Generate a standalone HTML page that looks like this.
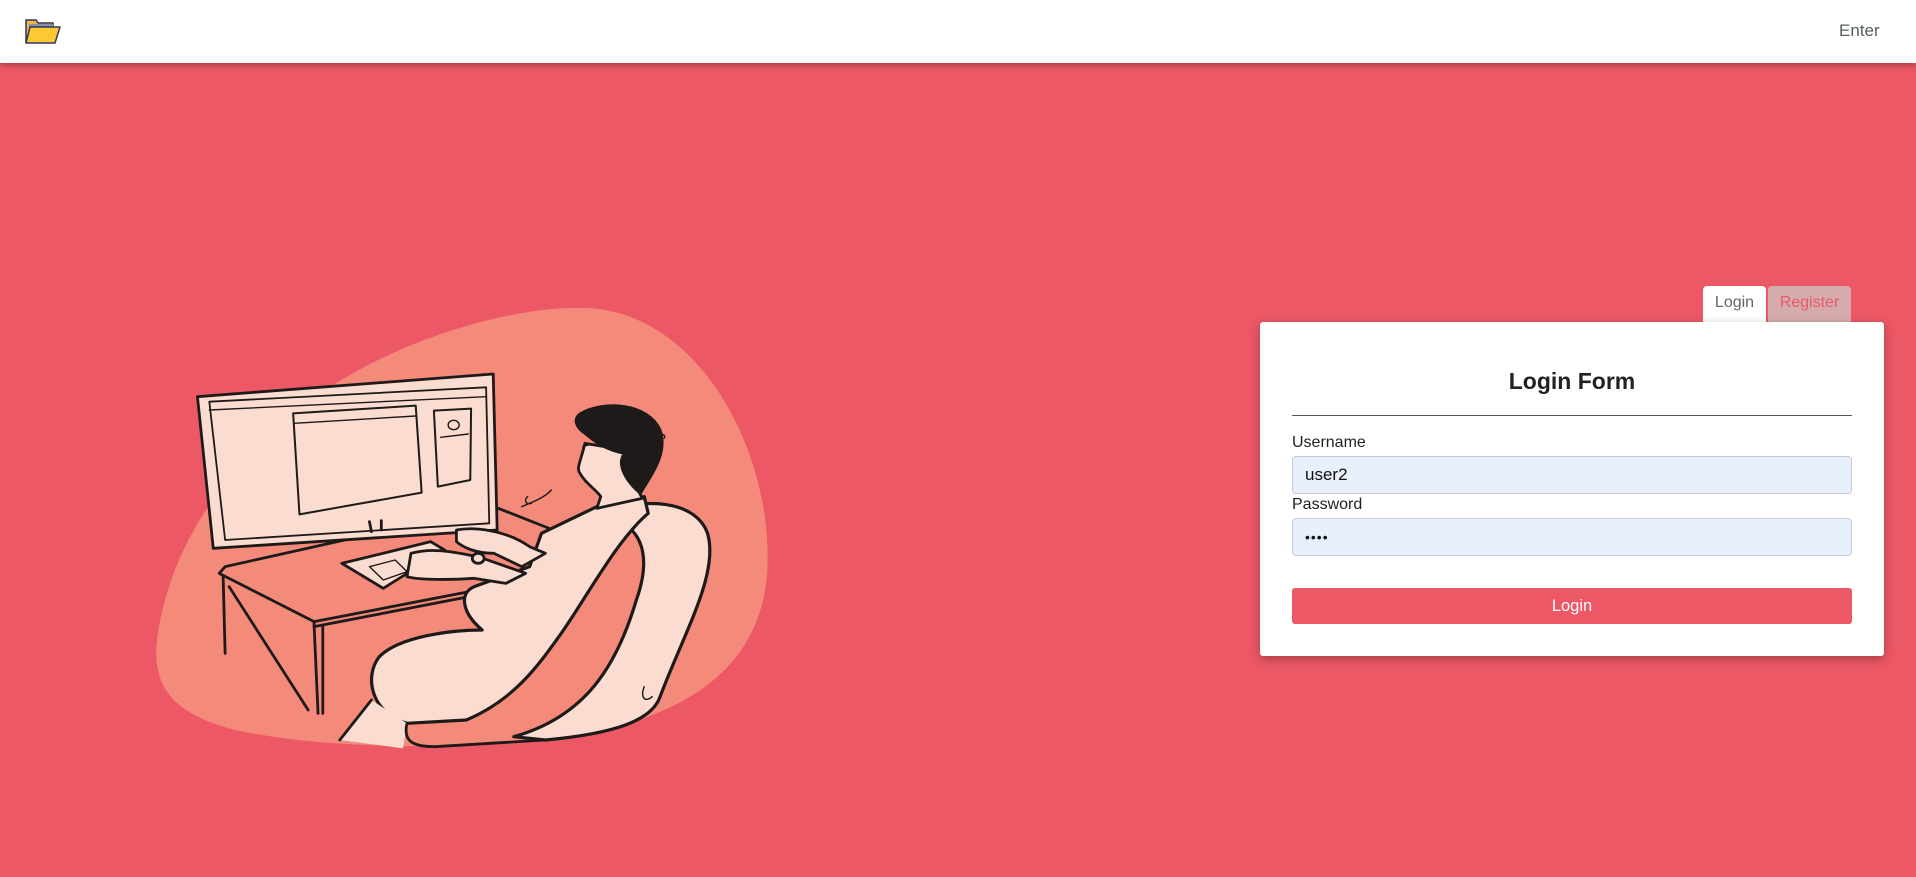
<!DOCTYPE html>
<html><head><meta charset="utf-8">
<style>
*{box-sizing:border-box;margin:0;padding:0}
html,body{width:1916px;height:877px;overflow:hidden}
body{background:#EC5866;font-family:"Liberation Sans",Roboto,Arial,sans-serif;position:relative}
.hdr{position:absolute;left:0;top:0;width:1916px;height:63px;background:#fff;box-shadow:0 2px 6px rgba(0,0,0,.35);z-index:2}
.enter{position:absolute;left:1839px;top:21px;font-size:17px;color:#55605a}
.tab{position:absolute;top:286px;height:36px;border-radius:4px 4px 0 0;font-size:16px;text-align:center;line-height:34px}
.t1{left:1703px;width:63px;background:#fff;color:#666}
.t2{left:1768px;width:83px;background:#D6ABAB;color:#E85A68}
.card{position:absolute;left:1260px;top:322px;width:624px;height:334px;background:#fff;border-radius:3px;box-shadow:0 3px 10px rgba(0,0,0,.3)}
.title{position:absolute;left:0;width:624px;top:368px;text-align:center;font-size:23px;font-weight:bold;color:#222}
.hr{position:absolute;left:1292px;top:415px;width:560px;height:1px;background:#555}
.lbl{position:absolute;left:1292px;font-size:16px;color:#222}
.inp{position:absolute;left:1292px;width:560px;height:38px;background:#E8F0FE;border:1px solid #c8ccd4;border-radius:4px;font-size:17px;color:#111;padding-left:12px;line-height:36px}
.btn{position:absolute;left:1292px;top:588px;width:560px;height:36px;background:#EC5866;border-radius:3px;color:#fff;text-align:center;line-height:36px;font-size:16.5px}
svg.il *{vector-effect:non-scaling-stroke}
</style></head><body>
<div class="hdr">
<svg style="position:absolute;left:24px;top:18px" width="38" height="27" viewBox="0 0 38 27">
<path d="M2 2 H12 L14 5 H29 V24 H2 Z" fill="#F0B840" stroke="#2f3560" stroke-width="1.5"/>
<path d="M5 6 H29 V10 H5Z" fill="#8a8fa8"/>
<path d="M6 9 H36 L31 25 H2 Z" fill="#FDC933" stroke="#2f3560" stroke-width="1.5" stroke-linejoin="round"/>
</svg>
<div class="enter">Enter</div>
</div>

<svg class="il" style="position:absolute;left:150px;top:300px" width="620" height="460" viewBox="0 0 1568 1380" preserveAspectRatio="none">
<path d="M470 250 C700 80 1000 0 1150 30 C1400 80 1565 450 1562 780 C1560 1080 1380 1240 1100 1300 C800 1360 400 1345 200 1285 C50 1235 0 1150 20 1000 C60 700 220 450 470 250 Z" fill="#F48B7A"/>
<g stroke="#1e1a1a" stroke-width="2.8" stroke-linejoin="round" stroke-linecap="round" fill="none">
<path d="M175 820 L415 965 L960 840 L1020 690 L870 620 L190 800 Z" fill="#F48B7A"/>
<path d="M415 965 L415 980 L960 855"/>
<path d="M185 830 L190 1060 M415 975 L425 1240 M200 860 L400 1230 M437 975 L437 1240"/>
<path d="M120 290 L868 222 L878 690 L160 745 Z" fill="#FADCD0"/>
<path d="M150 305 L850 262 L858 670 L190 720 Z" stroke-width="1.8"/>
<path d="M150 330 L850 290" stroke-width="1.4"/>
<path d="M362 340 L672 317 L687 578 L378 643 Z" stroke-width="2"/>
<path d="M365 370 L672 348" stroke-width="1.4"/>
<path d="M718 332 L812 326 L810 540 L728 560 Z" stroke-width="2"/>
<circle cx="768" cy="375" r="14" stroke-width="1.4"/>
<path d="M735 412 L805 402" stroke-width="1.4"/>
<path d="M555 665 L560 695 M585 662 L585 690"/>
<path d="M485 790 L710 725 L745 750 L590 865 Z" fill="#FADCD0"/>
<path d="M555 800 L620 780 L650 815 L590 840 Z" stroke-width="1.4"/>
<path d="M1140 640 C1250 590 1380 600 1410 700 C1440 820 1350 1000 1290 1190 C1270 1260 1180 1300 1000 1320 L920 1310 C1100 1250 1180 1100 1230 900 C1260 800 1260 700 1180 660 Z" fill="#FADCD0" stroke-width="3.2"/>
<path d="M1130 620 L1250 590 L1260 640 C1180 720 1100 900 1040 1000 C980 1100 920 1200 800 1260 L650 1270 C560 1240 540 1130 580 1070 C630 1010 760 990 840 990 C790 940 780 880 820 860 L960 800 L990 700 Z" fill="#FADCD0" stroke-width="3.2"/>
<path d="M480 1320 L560 1200 L650 1270 L640 1345 Z" fill="#FADCD0" stroke="none"/>
<path d="M560 1200 L480 1320"/>
<path d="M650 1270 C640 1320 660 1340 720 1340 L1000 1320"/>
<path d="M775 690 C820 680 900 690 960 740 L1000 760 L940 800 L870 760 C820 760 790 740 775 725 Z" fill="#FADCD0"/>
<path d="M660 760 C720 740 780 760 830 770 L950 820 L900 850 L820 835 C760 840 680 840 650 830 Z" fill="#FADCD0"/>
<circle cx="830" cy="775" r="15" fill="#FADCD0"/>
<path d="M1100 430 C1090 480 1080 500 1085 515 C1100 550 1130 570 1140 590 L1130 625 L1245 595 L1230 560 C1250 520 1230 470 1200 450 Z" fill="#FADCD0"/>
<path d="M1090 340 C1150 300 1260 310 1290 390 C1310 460 1270 520 1240 580 C1200 540 1180 490 1200 460 C1150 450 1120 420 1100 400 C1075 380 1070 355 1090 340 Z" fill="#1e1a1a"/>
<path d="M1095 440 C1120 425 1160 435 1195 455" stroke-width="1.8"/>
<path d="M1290 405 C1300 400 1305 410 1300 415" stroke-width="1.4"/>
<path d="M940 620 C980 600 1000 590 1015 570 M955 590 C945 600 950 615 965 610" stroke-width="1.4"/>
<path d="M1250 1160 C1240 1190 1250 1210 1270 1190" stroke-width="1.4"/>
</g>
</svg>

<div class="tab t1">Login</div>
<div class="tab t2">Register</div>
<div class="card"><div class="title" style="top:46px">Login Form</div></div>
<div class="hr"></div>
<div class="lbl" style="top:434px">Username</div>
<div class="inp" style="top:456px">user2</div>
<div class="lbl" style="top:496px">Password</div>
<div class="inp" style="top:518px;font-size:14px;letter-spacing:1px">••••</div>
<div class="btn">Login</div>
</body></html>
